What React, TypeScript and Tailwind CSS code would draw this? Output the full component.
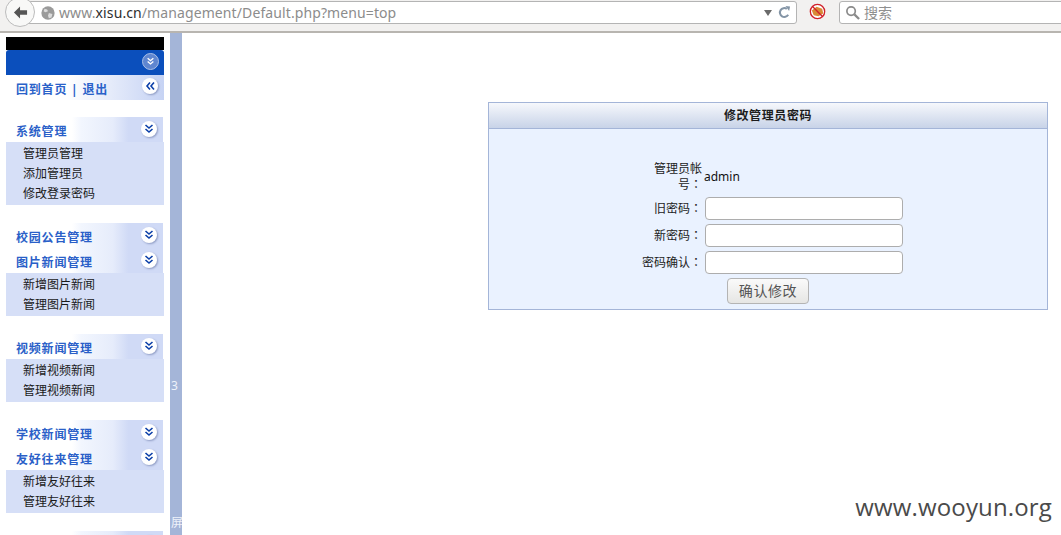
import React from "react";

const cjk = "font-['Noto_Sans','Noto_Sans_CJK_SC',sans-serif]";

function Chevrons({ left = false }: { left?: boolean }) {
  return (
    <svg viewBox="0 0 16 16" className="w-[16px] h-[16px] rounded-full bg-white shadow-[1px_1px_2px_#8f9cc4]">
      <g fill="none" stroke="#0b3fa8" strokeWidth="1.6" transform={left ? "rotate(90 8 8)" : undefined}>
        <path d="M4.5 4 8 7l3.5-3" />
        <path d="M4.5 8 8 11l3.5-3" />
      </g>
    </svg>
  );
}

function Header({ label }: { label: string }) {
  return (
    <div className="relative h-[25px] w-[157px] bg-[linear-gradient(90deg,#ffffff_0%,#ffffff_42%,#f2f6fe_48%,#e6ecfb_68%,#d0daf6_78%,#d0daf6_100%)]">
      <span className="absolute left-[10px] top-[7px] text-[12px] leading-[16px] font-bold tracking-[0.8px] text-[#2a5fc8]">{label}</span>
      <span className="absolute left-[135px] top-[4px] flex"><Chevrons /></span>
    </div>
  );
}

function Items({ items }: { items: string[] }) {
  return (
    <div className="w-[158px] bg-[#d6dff7] pl-[17px] pt-[2px] pb-[1px] text-[12px] leading-[20px] text-[#1a1a1a]">
      {items.map((t) => <div key={t}>{t}</div>)}
    </div>
  );
}

function Colon() {
  return <span className="font-['Noto_Sans_CJK_TC',sans-serif] leading-[0]">：</span>;
}

function Row({ label, children }: { label: string; children: React.ReactNode }) {
  return (
    <div className="flex items-center h-[23px]">
      <div className="w-[60px] shrink-0 whitespace-nowrap text-right text-[12px] leading-[16px] text-[#222]">{label}<Colon /></div>
      <div className="ml-[3px]">{children}</div>
    </div>
  );
}

function Field() {
  return <input type="password" className="block w-[198px] h-[23px] bg-white border border-[#adadad] rounded-[4px]" />;
}

export default function App() {
  return (
    <div className={`relative w-[1061px] h-[535px] overflow-hidden bg-white ${cjk}`}>
      {/* browser toolbar */}
      <div className="relative flex items-start h-[33px] bg-[#f2f1f0] border-b-2 border-[#b8b5b0]">
        <div className="ml-[26px] mt-px shrink-0 flex items-center w-[771px] h-[23px] bg-white border border-[#b4b4b4] rounded-[3px]">
          <svg viewBox="0 0 16 16" className="ml-[14px] w-[14px] h-[14px] shrink-0">
            <circle cx="8" cy="8" r="7.6" fill="#9a9a9a" />
            <path d="M4 3l3 1 1 2-3 1-2-1zM9 8l4 1-1 4-3 1-1-3z" fill="#dcdcdc" />
          </svg>
          <span className="ml-[4px] text-[14px] leading-[20px] tracking-[0.1px] text-[#8c8c8c] whitespace-nowrap">
            www.<span className="text-[#2e2e2e]">xisu.cn</span>/management/Default.php?menu=top
          </span>
          <div className="ml-auto flex items-center mr-[5px] gap-[6px]">
            <svg viewBox="0 0 8 6" className="w-[8px] h-[6px]"><path d="M0 0h8L4 6z" fill="#6a6a6a" /></svg>
            <svg viewBox="0 0 14 14" className="w-[13px] h-[13px]">
              <path d="M11 9.5A4.8 4.8 0 1 1 9.5 3" fill="none" stroke="#8495a6" strokeWidth="2.2" />
              <path d="M8 0l5 .5-1 5z" fill="#8495a6" />
            </svg>
          </div>
        </div>
        <svg viewBox="0 0 18 18" className="ml-[12px] mt-[3px] w-[17px] h-[17px] shrink-0">
          <circle cx="9" cy="9" r="7" fill="#fff" />
          <path d="M3 8l5-4 6 2 1 5-5 3-5-1z" fill="#d98a36" />
          <circle cx="9" cy="9" r="7.6" fill="none" stroke="#d0202a" strokeWidth="1.4" />
          <path d="M3.5 3.5l11 11" stroke="#d0202a" strokeWidth="1.4" />
        </svg>
        <div className="ml-[13px] shrink-0 flex items-center w-[240px] h-[23px] mt-px bg-white border border-[#b4b4b4] rounded-l-[3px]">
          <svg viewBox="0 0 16 16" className="ml-[5px] w-[15px] h-[15px]" fill="none" stroke="#8a8a8a" strokeWidth="1.8">
            <circle cx="6.5" cy="6.5" r="4.5" />
            <path d="M10 10l5 5" strokeWidth="2.4" />
          </svg>
          <span className="ml-[4px] text-[14px] leading-[20px] text-[#8f8f8f]">搜索</span>
        </div>
        {/* back button over the bar */}
        <div className="absolute left-[5px] -top-[3px] w-[30px] h-[30px] rounded-full bg-[#f8f8f7] border border-[#bcbcbc] flex items-center justify-center">
          <svg viewBox="0 0 16 16" className="w-[15px] h-[15px]"><path d="M7.5 1.5 1 8l6.5 6.5V10.5H15v-5H7.5z" fill="#555" /></svg>
        </div>
      </div>

      <div className="flex h-[502px]">
        {/* sidebar */}
        <div className="w-[170px] shrink-0 pl-[6px] pt-[4px] overflow-hidden">
          <div className="w-[158px] h-[13px] bg-black" />
          <div className="relative w-[158px] h-[25px] bg-[#0b4fbc] rounded-t-[3px]">
            <span className="absolute left-[136px] top-[3px] w-[17px] h-[17px] rounded-full bg-[#5f86d0] border border-[#a9bfe6] flex items-center justify-center">
              <svg viewBox="0 0 16 16" className="w-[13px] h-[13px]" fill="none" stroke="#fff" strokeWidth="1.7"><path d="M4.5 4 8 7l3.5-3" /><path d="M4.5 8 8 11l3.5-3" /></svg>
            </span>
          </div>
          <div className="relative w-[158px] h-[25px] bg-[linear-gradient(90deg,#ffffff_0%,#ffffff_38%,#c6d3f4_100%)]">
            <span className="absolute left-[10px] top-[7px] text-[12px] leading-[16px] font-bold tracking-[0.8px] text-[#2a62c9]">回到首页 | 退出</span>
            <span className="absolute left-[136px] top-[3px] flex"><Chevrons left /></span>
          </div>

          <div className="mt-[17px]"><Header label="系统管理" /></div>
          <Items items={["管理员管理", "添加管理员", "修改登录密码"]} />

          <div className="mt-[18px]"><Header label="校园公告管理" /></div>
          <Header label="图片新闻管理" />
          <Items items={["新增图片新闻", "管理图片新闻"]} />

          <div className="mt-[18px]"><Header label="视频新闻管理" /></div>
          <Items items={["新增视频新闻", "管理视频新闻"]} />

          <div className="mt-[18px]"><Header label="学校新闻管理" /></div>
          <Header label="友好往来管理" />
          <Items items={["新增友好往来", "管理友好往来"]} />

          <div className="mt-[18px]"><Header label="" /></div>
        </div>

        {/* splitter */}
        <div className="w-[12px] shrink-0 bg-[#a4b5d8] text-[12px] leading-[16px] text-[#eef2fa] overflow-hidden pt-[345px] pl-px">
          <div>3</div>
          <div className="mt-[121px]">屏</div>
        </div>

        {/* main */}
        <div className="pl-[306px] pt-[69px]">
          <div className="w-[560px] h-[208px] border border-[#a4b5d8] bg-[#eaf2ff] flex flex-col">
            <div className="h-[26px] shrink-0 border-b border-[#a4b5d8] bg-[linear-gradient(180deg,#f6f8fc,#c8d3e8)] flex items-center justify-center text-[12px] font-bold tracking-[0.6px] text-[#1c1c1c]">
              修改管理员密码
            </div>
            <div className="pl-[153px] pt-[32px] flex flex-col gap-[4px]">
              <div className="flex items-center h-[32px]">
                <div className="w-[60px] shrink-0 text-right text-[12px] leading-[16px] text-[#222]">管理员帐<br />号<Colon /></div>
                <div className="ml-[2px] text-[12px] leading-[16px] text-[#111]">admin</div>
              </div>
              <Row label="旧密码"><Field /></Row>
              <Row label="新密码"><Field /></Row>
              <Row label="密码确认"><Field /></Row>
              <button className="ml-[85px] w-[82px] h-[26px] border border-[#b4b4b4] rounded-[4px] bg-[linear-gradient(180deg,#fafafa,#e6e6e4)] text-[14px] leading-[20px] tracking-[0.6px] text-[#555]">
                确认修改
              </button>
            </div>
          </div>
        </div>
      </div>

      <div className="absolute right-[9px] bottom-[13px] font-['Open_Sans',sans-serif] text-[24px] tracking-[0.15px] leading-[30px] text-[#4a4a4a]">www.wooyun.org</div>
    </div>
  );
}
